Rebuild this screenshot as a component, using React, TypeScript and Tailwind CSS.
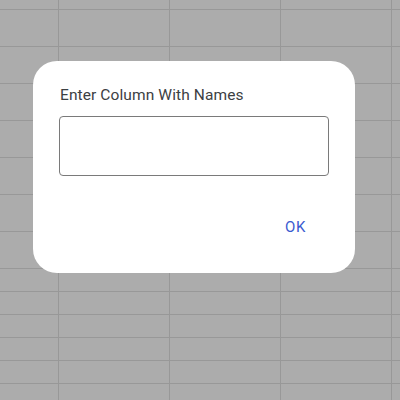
const rowHeights = [9, 36, 36, 36, 36, 36, 36, 36, 22, 22, 22, 22, 22, 16];
const colWidths = [58, 110, 110, 110, 8];

function SheetGrid() {
  return (
    <div
      className="grid h-[400px] w-[400px] gap-px bg-[#989898]"
      style={{
        gridTemplateColumns: colWidths.map((w) => `${w}px`).join(" "),
        gridTemplateRows: rowHeights.map((h) => `${h}px`).join(" "),
      }}
    >
      {rowHeights.map((_, r) =>
        colWidths.map((_, c) => <div key={`${r}-${c}`} className="bg-[#acacac]" />)
      )}
    </div>
  );
}

export default function App() {
  return (
    <div className="relative h-[400px] w-[400px] overflow-hidden font-['Roboto',sans-serif]">
      <SheetGrid />
      <div className="absolute left-[33px] top-[61px] flex h-[212px] w-[322px] flex-col rounded-[24px] bg-white px-[26px] pt-[24px]">
        <p className="pl-px text-[15.5px] leading-[20px] tracking-[0.1px] text-[#3c4043]">
          Enter Column With Names
        </p>
        <input
          type="text"
          className="mt-[11px] h-[60px] w-[270px] rounded-[4px] border border-[#7a7a7a] outline-none"
        />
        <div className="mt-[41px] flex justify-end pr-[23px]">
          <button className="text-[15px] leading-[20px] tracking-[0.6px] text-[#3b5bd0]">OK</button>
        </div>
      </div>
    </div>
  );
}
